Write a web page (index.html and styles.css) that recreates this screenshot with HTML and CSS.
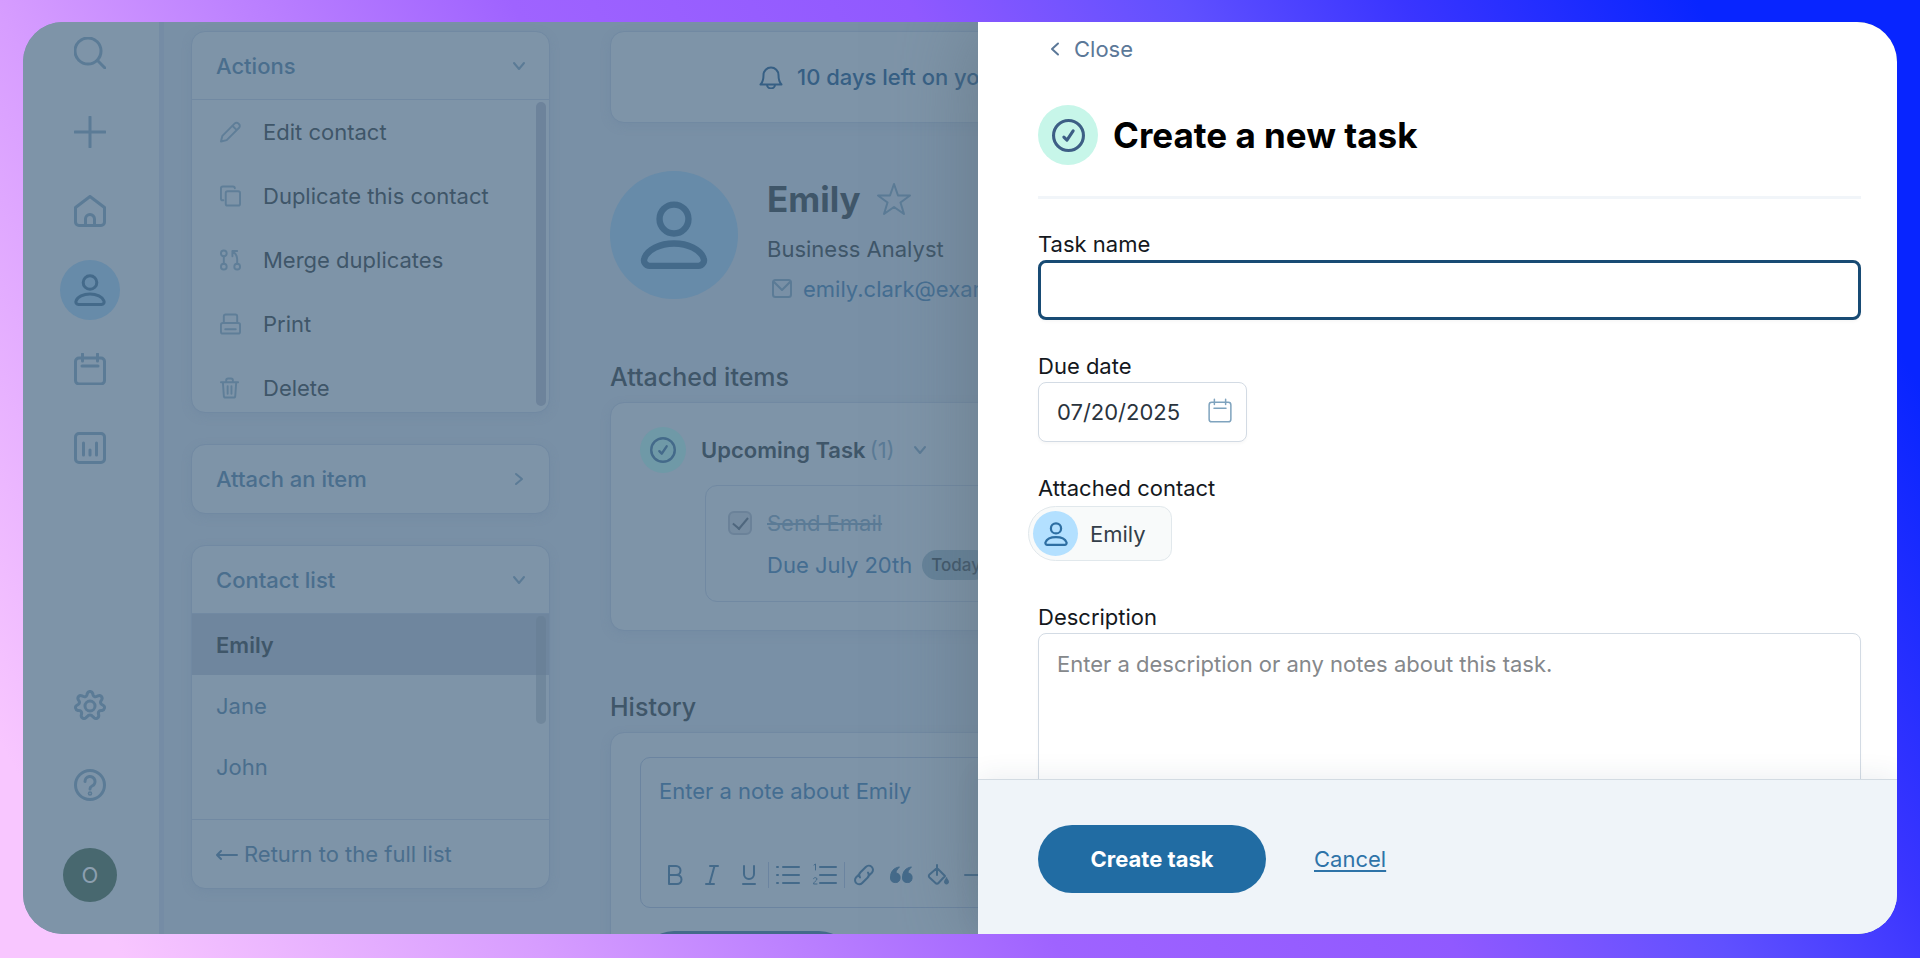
FILE: index.html
```html
<!DOCTYPE html>
<html lang="en">
<head>
    <meta charset="UTF-8">
    <meta name="viewport" content="width=device-width, initial-scale=1.0">
    <title>Create a new task</title>
    <link rel="stylesheet" href="styles.css">
</head>
<body>

    <!-- Shared icons -->
    <svg class="sprite" aria-hidden="true">
        <symbol id="i-user" viewBox="0 0 32 32"><ellipse cx="16" cy="8.5" rx="6.800" ry="6.800"/><path d="M4.5 30.500h23a2.600 2.600 0 0 0 2.400-3.600C28.400 22.900 22.700 20 16 20S3.600 22.900 2.100 26.900A2.600 2.600 0 0 0 4.500 30.500z"/></symbol>
        <symbol id="i-calendar" viewBox="0 0 32 32"><rect x="1.500" y="5" width="29" height="26" rx="3.500"/><path d="M8.500 1v7M23.500 1v7M8 13h16"/></symbol>
        <symbol id="i-task" viewBox="0 0 32 32"><circle cx="16" cy="16" r="14.500"/><path d="M11.500 17.500l3 3 6-9"/></symbol>
        <symbol id="i-down" viewBox="0 0 14 14"><path d="M2 4l5 6 5-6"/></symbol>
    </svg>

    <div class="window">

        <!-- Sidebar -->
        <nav class="sidebar">
            <button class="nav-btn" aria-label="Search"><svg viewBox="0 0 32 32"><circle cx="14" cy="14" r="13"/><path d="M23.500 23.500l7.500 7.500"/></svg></button>
            <button class="nav-btn" aria-label="Add"><svg viewBox="0 0 32 32"><path d="M16 1v30M1 16h30"/></svg></button>
            <button class="nav-btn" aria-label="Home"><svg viewBox="0 0 32 32"><path d="M1.500 12.500L16 1.500l14.500 11V27a3.500 3.500 0 0 1-3.500 3.500H5A3.500 3.500 0 0 1 1.500 27z"/><path d="M11.500 30v-6a4.500 4.500 0 0 1 9 0v6"/></svg></button>
            <button class="nav-btn active" aria-label="Contacts"><svg><use href="#i-user"/></svg></button>
            <button class="nav-btn" aria-label="Calendar"><svg><use href="#i-calendar"/></svg></button>
            <button class="nav-btn" aria-label="Reports"><svg viewBox="0 0 32 32"><rect x="1.500" y="1.500" width="29" height="29" rx="3.500"/><path d="M9.500 11v12M16 18v5M22.500 11v12"/></svg></button>
            <button class="nav-btn nav-bottom" aria-label="Settings"><svg viewBox="0 0 32 32"><circle cx="16" cy="16" r="5"/><path d="M13.300 3.500a2.800 2.800 0 0 1 5.400 0l.4 1.500a2.500 2.500 0 0 0 3.500 1.500l1.400-.7a2.800 2.800 0 0 1 3.700 3.900l-.8 1.300a2.500 2.500 0 0 0 .9 3.500l1.300.7a2.800 2.800 0 0 1-.9 5.200l-1.600.2a2.500 2.500 0 0 0-2.200 3l.3 1.500a2.800 2.800 0 0 1-4.700 2.600l-1.400-1.300a3 3 0 0 0-5.200 0L12 27.700a2.800 2.800 0 0 1-4.700-2.600l.3-1.500a2.500 2.500 0 0 0-2.200-3l-1.600-.2a2.800 2.800 0 0 1-.9-5.200l1.300-.7a2.500 2.500 0 0 0 .9-3.500l-.8-1.300A2.800 2.800 0 0 1 8 5.800l1.400.7A2.500 2.500 0 0 0 12.900 5z"/></svg></button>
            <button class="nav-btn" aria-label="Help"><svg viewBox="0 0 32 32"><circle cx="16" cy="16" r="14.500"/><path d="M11 12.500a5 5 0 1 1 7 4.500c-1.500.7-2 1.500-2 3"/><circle cx="16" cy="24.500" r=".8"/></svg></button>
            <div class="account">O</div>
        </nav>

        <!-- Left column -->
        <aside class="side-col">
            <section class="card">
                <button class="card-head lined">Actions <svg><use href="#i-down"/></svg></button>
                <div class="card-body actions">
                    <a href="#"><svg viewBox="0 0 22 22"><path d="M1 21l1.500-6L15.500 2a2.500 2.500 0 0 1 3.600 0l.9.900a2.500 2.500 0 0 1 0 3.600L7 19.500zM13 4.500L17.500 9"/></svg>Edit contact</a>
                    <a href="#"><svg viewBox="0 0 22 22"><rect x="6" y="6" width="15" height="15" rx="2"/><path d="M3.500 15.500H3a2 2 0 0 1-2-2V3a2 2 0 0 1 2-2h10.500a2 2 0 0 1 2 2"/></svg>Duplicate this contact</a>
                    <a href="#"><svg viewBox="0 0 22 22"><circle cx="4" cy="4" r="3"/><circle cx="4" cy="18" r="3"/><circle cx="18" cy="18" r="3"/><path d="M4 7v8M18 15v-5c0-3-1.500-6-5-8M13 7V1.500h5"/></svg>Merge duplicates</a>
                    <a href="#"><svg viewBox="0 0 22 22"><path d="M4 10V3a2 2 0 0 1 2-2h10a2 2 0 0 1 2 2v7M5.500 16.500h11"/><rect x="1" y="10" width="20" height="11" rx="2"/></svg>Print</a>
                    <a href="#"><svg viewBox="0 0 22 22"><path d="M1 5h18M3 5l1 14a2 2 0 0 0 2 2h8a2 2 0 0 0 2-2l1-14M6.500 4.500V3a2 2 0 0 1 2-2h3a2 2 0 0 1 2 2v1.500M8 9v8M12 9v8"/></svg>Delete</a>
                    <span class="scroll"></span>
                </div>
            </section>

            <section class="card">
                <button class="card-head">Attach an item <svg viewBox="0 0 14 14"><path d="M4 2l6 5-6 5"/></svg></button>
            </section>

            <section class="card">
                <button class="card-head lined">Contact list <svg><use href="#i-down"/></svg></button>
                <div class="card-body contacts">
                    <a href="#" class="selected">Emily</a>
                    <a href="#">Jane</a>
                    <a href="#">John</a>
                    <span class="scroll"></span>
                </div>
                <a class="card-foot" href="#"><svg viewBox="0 0 22 14"><path d="M21 8H1M5 4L1 8l4 4"/></svg>Return to the full list</a>
            </section>
        </aside>

        <!-- Contact page -->
        <main class="main-col">
            <div class="card banner">
                <svg viewBox="0 0 24 24"><path d="M1.500 19.500h21C20 17 19.500 14 19.500 10a7.500 7.500 0 0 0-15 0c0 4-.5 7-3 9.500zM8 19.500a4 4 0 0 0 8 0"/></svg>
                10 days left on your
            </div>

            <div class="profile">
                <div class="profile-pic"><svg><use href="#i-user"/></svg></div>
                <div>
                    <h1>Emily <svg viewBox="0 0 34 34"><path d="M17 2l4 11.500h12L23.500 20.500 27 32l-10-7-10 7 3.500-11.500L1 13.500h12z"/></svg></h1>
                    <p>Business Analyst</p>
                    <a href="#"><svg viewBox="0 0 20 20"><rect x="1" y="1" width="18" height="17" rx="2.500"/><path d="M2 3l8 8 8-8"/></svg>emily.clark@example.com</a>
                </div>
            </div>

            <h2>Attached items</h2>
            <section class="card attached">
                <div class="task-head">
                    <span class="task-icon"><svg><use href="#i-task"/></svg></span>
                    <b>Upcoming Task</b> <span class="count">(1)</span>
                    <svg class="chevron"><use href="#i-down"/></svg>
                </div>
                <div class="task">
                    <input type="checkbox" id="done" checked>
                    <div>
                        <label for="done">Send Email</label>
                        <p>Due July 20th <span class="pill">Today</span></p>
                    </div>
                </div>
            </section>

            <h2>History</h2>
            <section class="card history">
                <div class="note">
                    <textarea aria-label="Note" placeholder="Enter a note about Emily"></textarea>
                    <div class="toolbar">
                        <button aria-label="Bold"><svg viewBox="0 0 24 24"><path d="M6 3h7a4.500 4.500 0 0 1 0 9H6zM6 12h8a4.500 4.500 0 0 1 0 9H6z"/></svg></button>
                        <button aria-label="Italic"><svg viewBox="0 0 24 24"><path d="M10 3h8M6 21h8M14.500 3l-5 18"/></svg></button>
                        <button aria-label="Underline"><svg viewBox="0 0 24 24"><path d="M7 3v8a5 5 0 0 0 10 0V3M6 21h12"/></svg></button>
                        <i></i>
                        <button aria-label="Bulleted list"><svg viewBox="0 0 24 24"><path d="M7 4h16M7 12h16M7 20h16M1 4h1M1 12h1M1 20h1"/></svg></button>
                        <button aria-label="Numbered list"><svg viewBox="0 0 24 24"><path d="M7 4h16M7 12h16M7 20h16"/><path class="thin" d="M1 2l1.500-1v6M.5 15.500c1-1.500 3.500-1 3.500.5 0 1.500-3.500 3-3.500 5H4"/></svg></button>
                        <i></i>
                        <button aria-label="Link"><svg viewBox="0 0 24 24"><path d="M8 14.500a4 4 0 0 1 .5-5.200l5.300-5.300a4 4 0 0 1 6 5.800L17 12.500M16 9.500a4 4 0 0 1-.5 5.200L10.200 20a4 4 0 0 1-6-5.800L7 11.500"/></svg></button>
                        <button aria-label="Quote"><svg class="solid" viewBox="0 0 24 24"><path d="M10 4C5 5 1.500 8 1.500 15a4.800 4.800 0 1 0 5.500-5C7 8 8 6.500 10 4.500zM22 4c-5 1-8.500 4-8.500 11a4.800 4.800 0 1 0 5.500-5c0-2 1-3.500 3-5.500z"/></svg></button>
                        <button aria-label="Fill colour"><svg viewBox="0 0 24 24"><path d="M11 5l8 8-6.500 7a2 2 0 0 1-3 0L3.500 14.500a2 2 0 0 1 0-3zM11 12V2"/><path class="solid" d="M20.500 15c1.500 2 2 3 2 4a2 2 0 0 1-4 0c0-1 .5-2 2-4z"/></svg></button>
                        <button aria-label="Divider line"><svg viewBox="0 0 24 24"><path d="M2 12h20"/></svg></button>
                    </div>
                </div>
                <button class="save-note" aria-label="Save note"></button>
            </section>
        </main>

        <!-- New task drawer -->
        <form class="drawer">
            <div class="drawer-body">
                <button type="button" class="close"><svg viewBox="0 0 14 14"><path d="M10 1.500L4 7l6 5.500"/></svg>Close</button>

                <div class="drawer-title">
                    <span class="task-icon"><svg><use href="#i-task"/></svg></span>
                    <h2>Create a new task</h2>
                </div>

                <div class="field">
                    <label for="task-name">Task name</label>
                    <input type="text" id="task-name" class="focused">
                </div>

                <div class="field">
                    <label for="due-date">Due date</label>
                    <div class="date">
                        <input type="text" id="due-date" value="07/20/2025">
                        <svg><use href="#i-calendar"/></svg>
                    </div>
                </div>

                <div class="field contact-field">
                    <label for="contact">Attached contact</label>
                    <button type="button" id="contact" class="chip"><span><svg><use href="#i-user"/></svg></span>Emily</button>
                </div>

                <div class="field">
                    <label for="description">Description</label>
                    <textarea id="description" placeholder="Enter a description or any notes about this task."></textarea>
                </div>
            </div>

            <div class="drawer-foot">
                <button type="submit" class="create">Create task</button>
                <a href="#">Cancel</a>
            </div>
        </form>
    </div>

</body>
</html>
```
FILE: styles.css
```css
* {
    box-sizing: border-box;
}

body {
    margin: 0;
    height: 100vh;
    padding: 22px 23px 24px;
    background: linear-gradient(60deg, #f8c6ff 5%, #d79dff 22%, #9f63ff 43%, #9059ff 59%, #6050ff 70%, #3a35ff 79%, #0825ff 91%);
    font-family: Inter, "Liberation Sans", sans-serif;
    font-size: 22px;
    line-height: 30px;
    color: #3f5669;
}

button, input, textarea {
    font: inherit;
    color: inherit;
}

button {
    padding: 0;
    border: none;
    background: none;
    cursor: pointer;
}

a {
    color: inherit;
    text-decoration: none;
}

h1, h2, p {
    margin: 0;
}

svg {
    display: block;
    flex: none;
    fill: none;
    stroke: currentColor;
    stroke-width: 2;
    stroke-linecap: round;
    stroke-linejoin: round;
}

.sprite {
    position: absolute;
    width: 0;
    height: 0;
}

.window {
    position: relative;
    display: flex;
    height: 100%;
    overflow: hidden;
    border-radius: 40px;
    background: #7990a6;
}

/* Sidebar */
.sidebar {
    display: flex;
    flex: none;
    flex-direction: column;
    align-items: center;
    gap: 19px;
    width: 141px;
    padding: 1px 2px 32px 0;
    background: #7e94a8;
    border-right: 5px solid #758ca5;
}

.nav-btn {
    display: grid;
    flex: none;
    place-items: center;
    width: 60px;
    height: 60px;
    border-radius: 50%;
    color: #5b7b96;
}

.nav-btn svg {
    width: 32px;
    height: 32px;
    stroke-width: 3;
}

.nav-btn.active {
    background: #678ba9;
    color: #446a8a;
}

.nav-bottom {
    margin-top: auto;
}

.account {
    display: grid;
    flex: none;
    place-items: center;
    width: 54px;
    height: 54px;
    margin-top: 14px;
    border-radius: 50%;
    background: #48686f;
    color: #8c9fb0;
}

/* Cards */
.card {
    overflow: hidden;
    background: #7e94a8;
    border: 1px solid #7189a2;
    border-radius: 14px;
    box-shadow: 0 3px 8px #6f87a077;
}

.side-col {
    display: flex;
    flex: none;
    flex-direction: column;
    gap: 31px;
    width: 386px;
    padding: 9px 0 0 27px;
    color: #4a6e8d;
}

.card-head {
    display: flex;
    align-items: center;
    justify-content: space-between;
    width: 100%;
    height: 68px;
    padding: 0 23px 0 24px;
    font-weight: 500;
}

.card-head.lined {
    border-bottom: 1px solid #7189a2;
}

.card-head svg, .chevron {
    width: 14px;
    height: 14px;
    color: #5b7b96;
}

.card-body {
    position: relative;
}

.card-body a {
    display: flex;
    align-items: center;
    padding: 0 24px;
}

.actions {
    height: 312px;
    color: #3f5669;
}

.actions a {
    gap: 22px;
    height: 64px;
    padding-left: 28px;
}

.actions svg {
    width: 21px;
    height: 22px;
    color: #5f7e98;
}

.contacts {
    height: 205px;
}

.contacts a {
    height: 61px;
}

.contacts .selected {
    background: #6f869e;
    color: #3f5669;
    font-weight: 600;
}

.scroll {
    position: absolute;
    top: 2px;
    right: 3px;
    width: 10px;
    height: 304px;
    border-radius: 5px;
    background: #6d839b;
}

.contacts .scroll {
    height: 108px;
    background: #677e9599;
}

.card-foot {
    display: flex;
    align-items: center;
    gap: 6px;
    height: 69px;
    padding: 0 24px;
    border-top: 1px solid #7189a2;
}

.card-foot svg {
    width: 22px;
    height: 14px;
}

/* Contact page */
.main-col {
    flex: 1;
    padding: 9px 30px 0 60px;
}

.banner {
    display: flex;
    align-items: center;
    gap: 14px;
    height: 92px;
    padding-left: 148px;
    color: #365f84;
    font-weight: 500;
}

.banner svg {
    width: 24px;
    height: 24px;
}

.profile {
    display: flex;
    gap: 29px;
    margin: 48px 0 58px;
}

.profile-pic {
    display: grid;
    place-items: center;
    width: 128px;
    height: 128px;
    border-radius: 50%;
    background: #678ba9;
    color: #446a8a;
}

.profile-pic svg {
    width: 68px;
    height: 72px;
    stroke-width: 3;
}

.profile h1 {
    display: flex;
    align-items: center;
    gap: 16px;
    margin: 6px 0 13px;
    font-size: 35px;
    line-height: 44px;
}

.profile h1 svg {
    width: 34px;
    height: 34px;
    color: #5b7b96;
}

.profile a {
    display: flex;
    align-items: center;
    gap: 11px;
    margin-top: 10px;
    padding-left: 5px;
    color: #446d91;
}

.profile a svg {
    width: 20px;
    height: 20px;
    color: #5b7b96;
}

.main-col h2 {
    margin-bottom: 10px;
    font-size: 25px;
    font-weight: 500;
}

.attached {
    height: 229px;
    margin-bottom: 61px;
    padding: 24px 0 0 29px;
}

.task-head {
    display: flex;
    align-items: center;
    margin-bottom: 12px;
}

.task-icon {
    display: grid;
    flex: none;
    place-items: center;
    width: 60px;
    height: 60px;
    border-radius: 50%;
    background: #c7f6e9;
    color: #3d5f85;
}

.task-icon svg {
    width: 33px;
    height: 33px;
    stroke-width: 3;
}

.task-head .task-icon {
    width: 46px;
    height: 46px;
    margin-right: 15px;
    background: #6f99a7;
    color: #446a8a;
}

.task-head .task-icon svg {
    width: 26px;
    height: 26px;
}

.task-head b {
    font-weight: 600;
}

.count {
    margin: 0 18px 0 4px;
    color: #5b7b96;
}

.task {
    display: flex;
    gap: 15px;
    height: 117px;
    margin: 0 30px 0 65px;
    padding: 22px;
    border: 1px solid #7189a2;
    border-radius: 12px;
    color: #446d91;
}

.task input {
    display: grid;
    flex: none;
    place-items: center;
    width: 24px;
    height: 24px;
    margin: 3px 0;
    appearance: none;
    border: 2px solid #6b8299;
    border-radius: 6px;
    background: #768ca1;
}

.task input::after {
    content: "";
    width: 7px;
    height: 13px;
    margin-bottom: 3px;
    border: solid #4f677e;
    border-width: 0 2px 2px 0;
    transform: rotate(40deg);
}

.task label {
    color: #5b7b96;
    text-decoration: line-through;
}

.task p {
    display: flex;
    gap: 10px;
    margin-top: 12px;
}

.pill {
    padding: 0 9px;
    border-radius: 15px;
    background: #658299;
    color: #3f5669;
    font-size: 17px;
    font-weight: 500;
}

.history {
    height: 300px;
    padding: 24px 29px;
}

.note {
    height: 151px;
    padding: 18px;
    border: 1px solid #6b84a0;
    border-radius: 10px;
}

.note textarea {
    display: block;
    width: 100%;
    height: 86px;
    padding: 0;
    border: none;
    outline: none;
    background: none;
    resize: none;
}

.note ::placeholder {
    color: #446d91;
}

.toolbar {
    display: flex;
    align-items: center;
    gap: 13px;
    padding-left: 4px;
    color: #446a8a;
}

.toolbar svg {
    width: 24px;
    height: 24px;
}

.toolbar i {
    width: 1px;
    height: 26px;
    margin: 0 -6px;
    background: #6b84a0;
}

.toolbar .solid {
    fill: currentColor;
    stroke-width: 1;
}

.toolbar .thin {
    stroke-width: 1;
}

.save-note {
    display: block;
    width: 213px;
    height: 68px;
    margin-top: 23px;
    border-radius: 34px;
    background: #446a8a;
}

/* Drawer */
.drawer {
    position: absolute;
    top: 0;
    right: 0;
    bottom: 0;
    display: flex;
    flex-direction: column;
    width: calc(50% - 18px);
    background: #fff;
    box-shadow: 0 0 80px #5b6b7799;
    color: #14181d;
}

.drawer-body {
    flex: 1;
    min-height: 0;
    overflow: hidden;
    padding: 12px 36px 0 60px;
}

.close {
    display: flex;
    align-items: center;
    gap: 12px;
    padding-left: 10px;
    color: #5b7898;
}

.close svg {
    width: 14px;
    height: 14px;
}

.drawer-title {
    display: flex;
    align-items: center;
    gap: 15px;
    margin: 41px 0 31px;
    padding-bottom: 31px;
    border-bottom: 3px solid #f1f5f9;
    color: #000;
}

.drawer-title h2 {
    font-size: 35px;
    line-height: 44px;
}

.field {
    display: flex;
    flex-direction: column;
    align-items: flex-start;
    margin-bottom: 32px;
}

.field label {
    margin-bottom: 2px;
    line-height: 28px;
}

.field input, .field textarea {
    width: 100%;
    height: 60px;
    padding: 0 18px;
    border: 1px solid #d3dbe4;
    border-radius: 8px;
    outline: none;
    background: #fff;
    box-shadow: 0 2px 3px #00000008;
    color: #2a333d;
}

.field .focused {
    border: 3px solid #184b74;
}

.field textarea {
    height: 240px;
    padding: 15px 18px;
    resize: none;
}

.field ::placeholder {
    color: #85888b;
}

.date {
    position: relative;
    width: 209px;
}

.date svg {
    position: absolute;
    top: 16px;
    right: 15px;
    width: 24px;
    height: 25px;
    color: #7fa3be;
}

.contact-field {
    margin-bottom: 42px;
}

.chip {
    display: flex;
    align-items: center;
    gap: 12px;
    height: 55px;
    margin: 2px 0 0 -10px;
    padding: 0 25px 0 4px;
    border: 1px solid #e1e8ec;
    border-radius: 28px 12px 12px 28px;
    background: #f8fafa;
    color: #333e49;
}

.chip span {
    display: grid;
    place-items: center;
    width: 45px;
    height: 45px;
    border-radius: 50%;
    background: #b3e0ff;
    color: #2e6fa3;
}

.chip svg {
    width: 24px;
    height: 26px;
    stroke-width: 3;
}

.drawer-foot {
    display: flex;
    align-items: flex-start;
    gap: 48px;
    height: 155px;
    padding: 45px 60px;
    border-top: 1px solid #d3dbe2;
    background: #eff4f9;
    box-shadow: 0 -4px 24px #2a405514;
}

.create {
    width: 228px;
    height: 68px;
    border-radius: 34px;
    background: #216ca3;
    color: #fff;
    font-weight: 700;
}

.drawer-foot a {
    color: #2e73a8;
    line-height: 68px;
    text-decoration: underline;
    text-underline-offset: 3px;
}
```
